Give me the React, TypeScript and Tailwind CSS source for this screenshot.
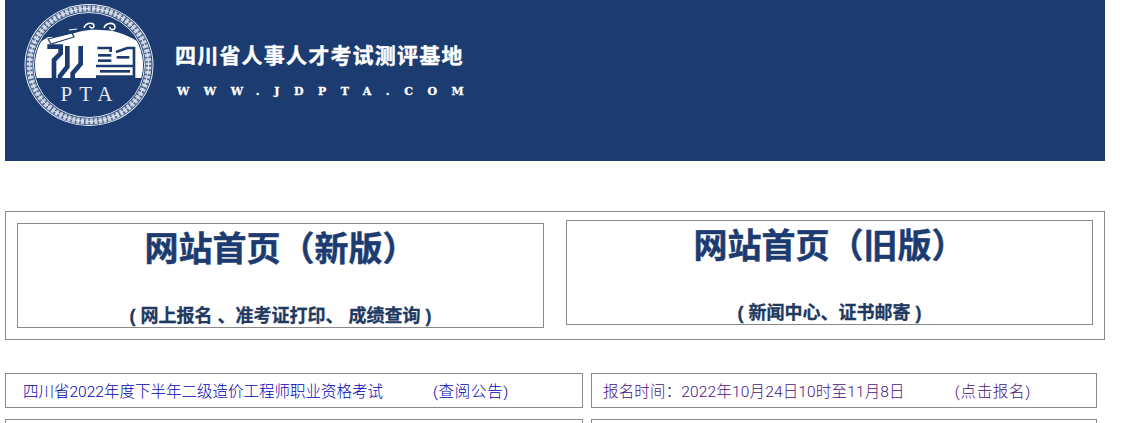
const NAVY = '#1c3b70'
const RING = '#c6d0e0'

const BANNER_TITLE = '四川省人事人才考试测评基地'

function Logo() {
  return (
    <svg width="130" height="124" viewBox="0 0 130 124" className="block shrink-0">
      <defs>
        <clipPath id="disc">
          <ellipse cx="65" cy="62" rx="54" ry="51" />
        </clipPath>
      </defs>
      {/* meander band */}
      <ellipse cx="65" cy="62" rx="64.5" ry="61" fill="#eef1f6" />
      <ellipse cx="65" cy="62" rx="63.5" ry="60" fill={NAVY} />
      <ellipse cx="65" cy="62" rx="59.5" ry="56.5" fill="none" stroke={RING} strokeWidth="6" />
      <ellipse cx="65" cy="62" rx="59.5" ry="56.5" fill="none" stroke={NAVY} strokeWidth="6" strokeDasharray="1.5 3" opacity="0.75" />
      <ellipse cx="65" cy="62" rx="59.5" ry="56.5" fill="none" stroke="#e6ebf3" strokeWidth="1" strokeDasharray="10 2" />
      <ellipse cx="65" cy="62" rx="55.5" ry="52.5" fill={NAVY} stroke="#e6ebf3" strokeWidth="1" />

      {/* white field under the dome */}
      <g clipPath="url(#disc)">
        <path d="M5 76 V46 L24 34 L42 34 C52 28 66 26 76 27 C88 27 100 30 113 38 L125 48 V76 Z" fill="#fff" />
      </g>
      <path d="M24 36 L48 30 L50 34 L27 41 Z" fill="#fff" stroke={NAVY} strokeWidth="1.2" />
      <path d="M45 27 L53 26" stroke="#fff" strokeWidth="1.2" />
      <g fill="none" stroke="#fff" strokeWidth="1.6">
        <path d="M60 25 C62 19 70 19 70 23 C70 26 65 25 66 23" />
        <path d="M80 25 C82 19 91 19 91 24 C91 28 85 27 86 24" />
      </g>

      {/* left seal glyph */}
      <g transform="translate(16 17) scale(0.3333)" fill="none" stroke={NAVY} strokeWidth="14">
        <path d="M22 80 H62 V100 L42 120 V176" />
        <path d="M82 78 V140 L60 168 V186" />
        <path d="M122 78 V132 L98 160 V186" />
      </g>
      {/* right seal glyph */}
      <g transform="translate(16 17) scale(0.3333)" fill="none" stroke={NAVY} strokeWidth="8">
        <path d="M172 84 H212 V96" />
        <path d="M228 96 L262 84 H282 V176" />
        <path d="M174 106 H214" />
        <path d="M230 112 H268" />
        <path d="M174 122 H214" />
        <path d="M168 138 H282" />
        <path d="M180 154 H270" />
        <path d="M168 170 H282" />
        <path d="M178 184 H262" />
      </g>

      <rect x="12" y="75" width="106" height="1.5" fill={NAVY} />
      <text
        x="66"
        y="98"
        textAnchor="middle"
        fill="#e4e8f0"
        fontSize="21"
        letterSpacing="7"
        fontFamily='"Liberation Serif", serif'
      >
        PTA
      </text>
    </svg>
  )
}

function LinkBox({ title, sub, className }: { title: string; sub: string; className: string }) {
  return (
    <div className={`w-[527px] h-[105px] border border-[#888] flex flex-col items-center overflow-hidden font-bold text-[#1c3b70] ${className}`}>
      <div className="text-[34px] leading-[48px] mt-[1px] [-webkit-text-stroke:0.5px_#1c3b70]">{title}</div>
      <div className="text-[18px] leading-[24px] mt-[31px] text-[#22395f] [-webkit-text-stroke:0.3px_#22395f]">{sub}</div>
    </div>
  )
}

function Notice({ text, action, className }: { text: string; action: string; className: string }) {
  return (
    <div className={`flex items-center h-full pt-[4px] text-[15.5px] font-light whitespace-pre font-['Roboto','Noto_Sans_CJK_SC',sans-serif] ${className}`}>
      <span>{text}</span>
      <span className="ml-[50px] tracking-[0.7px]">{action}</span>
    </div>
  )
}

export default function App() {
  return (
    <div className="w-[1133px] h-[423px] overflow-hidden bg-white pl-[5px] font-['Liberation_Sans','Noto_Sans_CJK_SC',sans-serif]">
      <div className="w-[1100px] h-[161px] bg-[#1c3b70] flex items-start pl-[19px] pt-[3px]">
        <Logo />
        <div className="ml-[21px] mt-[36px] text-white font-bold">
          <div className="text-[21px] leading-[34px] tracking-[1.2px] whitespace-nowrap [-webkit-text-stroke:0.4px_#fff]">
            {BANNER_TITLE}
          </div>
          <div className="text-[11px] leading-[14px] mt-[12px] ml-[2px] tracking-[14.5px] whitespace-nowrap font-['DejaVu_Serif',serif] [-webkit-text-stroke:0.3px_#fff]">
            WWW.JDPTA.COM
          </div>
        </div>
      </div>

      <div className="w-[1100px] h-[129px] mt-[50px] border border-[#888] flex justify-between px-[11px]">
        <LinkBox title="网站首页（新版）" sub="( 网上报名 、准考证打印、 成绩查询 )" className="mt-[11px]" />
        <LinkBox title="网站首页（旧版）" sub="( 新闻中心、证书邮寄 )" className="mt-[8px]" />
      </div>

      <div className="flex mt-[33px]">
        <div className="w-[578px] h-[35px] border border-[#888] pl-[17px]">
          <Notice className="text-[#0000b4]" text="四川省2022年度下半年二级造价工程师职业资格考试" action="(查阅公告)" />
        </div>
        <div className="w-[506px] h-[35px] border border-[#888] ml-[8px] pl-[11px]">
          <Notice className="text-[#4a1080] tracking-[0.16px]" text="报名时间：2022年10月24日10时至11月8日" action="(点击报名)" />
        </div>
      </div>
      <div className="flex mt-[11px]">
        <div className="w-[578px] h-[35px] border border-[#888]" />
        <div className="w-[506px] h-[35px] border border-[#888] ml-[8px]" />
      </div>
    </div>
  )
}
